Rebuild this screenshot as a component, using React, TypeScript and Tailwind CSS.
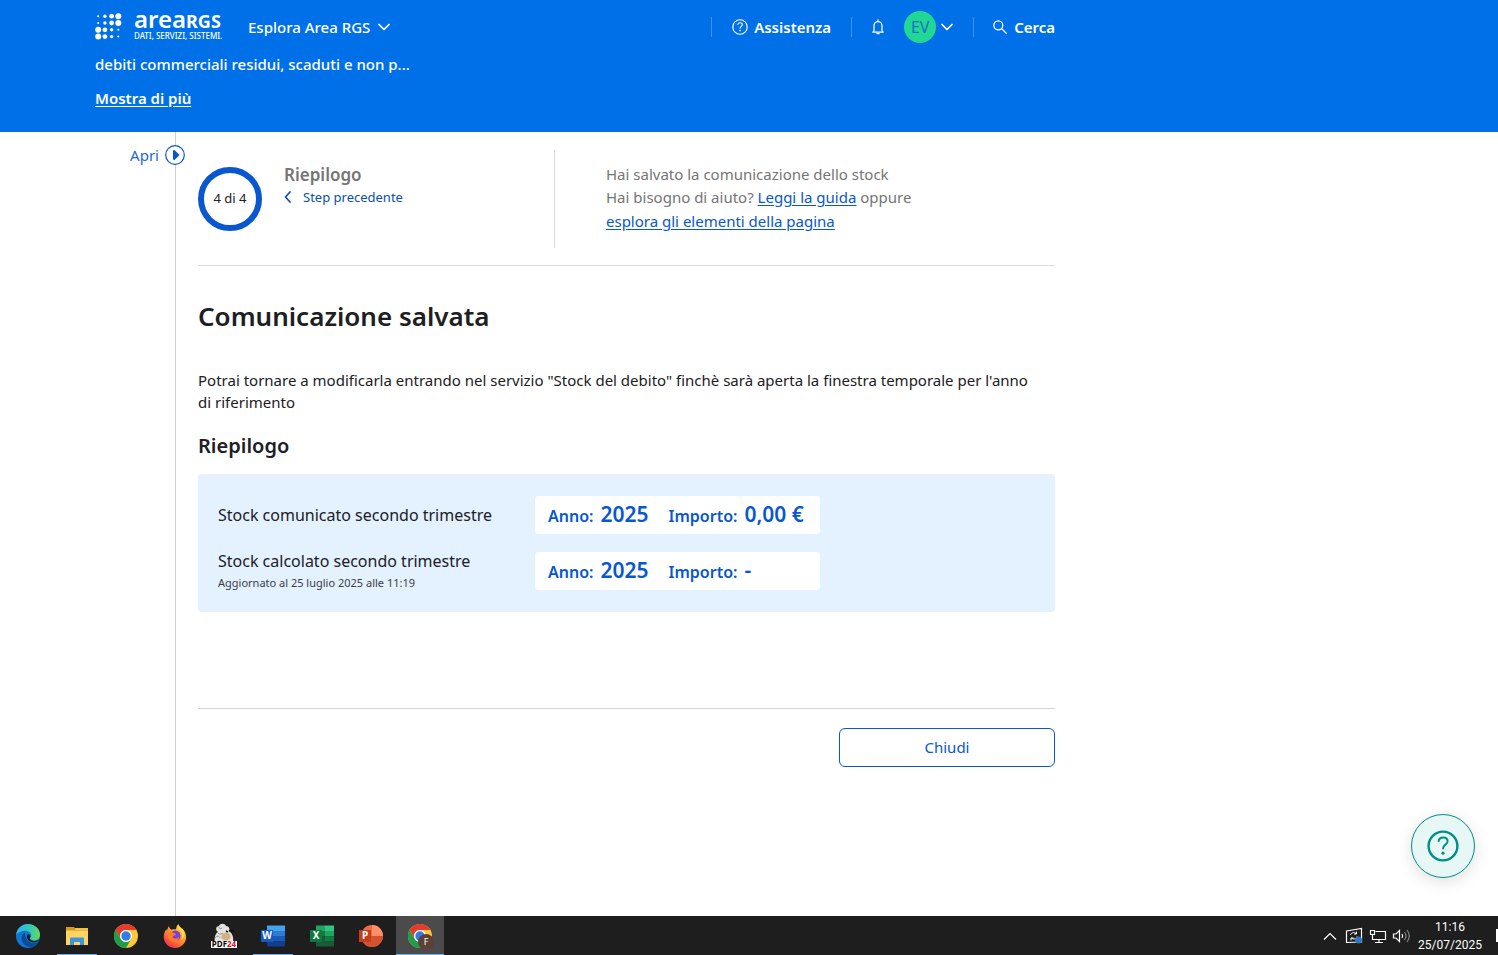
import type { ReactNode } from "react"

const DOTS = [
  [1, 1.7, 2.4, 3],
  [1, 1.7, 2.4, 3],
  [3, 2.4, 1.7, 1],
  [3, 2.4, 1.7, 1],
]

const STOCK_ROWS = [
  { label: "Stock comunicato secondo trimestre", note: null, year: "2025", amount: "0,00 €" },
  {
    label: "Stock calcolato secondo trimestre",
    note: "Aggiornato al 25 luglio 2025 alle 11:19",
    year: "2025",
    amount: "-",
  },
]

function ChevronDown() {
  return (
    <svg className="h-2 w-3" viewBox="0 0 12 8" fill="none" stroke="currentColor" strokeWidth={1.7} strokeLinecap="round" strokeLinejoin="round" aria-hidden>
      <path d="M1 1.500 6 6.500 11 1.500" />
    </svg>
  )
}

function HelpIcon({ className, ring, mark }: { className?: string; ring: number; mark: number }) {
  return (
    <svg className={className} viewBox="0 0 32 32" fill="none" stroke="currentColor" strokeLinecap="round" strokeLinejoin="round" aria-hidden>
      <circle cx="16" cy="16" r="14.4" strokeWidth={ring} />
      <path strokeWidth={mark} d="M11.6 11c.4-2.200 2.100-3.500 4.500-3.500 2.600 0 4.500 1.500 4.500 3.800 0 3.300-4.500 3.400-4.500 7.200" />
      <circle cx="16" cy="23.2" r="1.6" fill="currentColor" stroke="none" />
    </svg>
  )
}

function Logo() {
  return (
    <a href="#" className="flex w-[153px] shrink-0 items-center gap-3 pb-0.5 text-white">
      <svg className="h-[27px] w-[27px]" viewBox="0 0 27 27" fill="currentColor" aria-hidden>
        {DOTS.map((row, y) =>
          row.map((r, x) => <circle key={`${x}-${y}`} cx={3.2 + x * 6.7} cy={3.2 + y * 6.8} r={r} />)
        )}
      </svg>
      <span className="flex flex-col pb-1">
        <span className="flex items-baseline leading-5">
          <span className="text-2xl font-semibold leading-5">area</span>
          <span className="text-lg font-bold leading-5">RGS</span>
        </span>
        <span className="text-[8px] leading-[9px] whitespace-nowrap">DATI, SERVIZI, SISTEMI.</span>
      </span>
    </a>
  )
}

function Header() {
  return (
    <header className="h-[132px] bg-[#0070e9] text-[15px] font-medium leading-5 text-white">
      <div className="ml-[95px] mr-6 max-w-[960px]">
        <nav className="flex h-[54px] items-center">
          <Logo />
          <button type="button" className="flex items-center gap-2">
            Esplora Area RGS
            <ChevronDown />
          </button>
          <div className="ml-auto flex items-center font-semibold">
            <button type="button" className="flex items-center gap-[6px] border-l border-[#3d92f0] px-5">
              <HelpIcon className="h-4 w-4" ring={2.2} mark={2.2} />
              Assistenza
            </button>
            <button type="button" aria-label="Notifiche" className="flex h-5 items-center border-l border-[#3d92f0] px-[18px]">
              <svg className="h-4 w-4" viewBox="0 0 16 16" fill="none" stroke="currentColor" strokeWidth={1.2} strokeLinecap="round" strokeLinejoin="round" aria-hidden>
                <path d="M8 .8v1.400M4 11.800V6.600a4 4 0 0 1 8 0v5.200l1.200 1.400H2.800L4 11.800ZM6.800 14.600h2.400" />
              </svg>
            </button>
            <button type="button" aria-label="Profilo" className="flex items-center gap-[5px] pr-5">
              <span className="flex h-8 w-8 items-center justify-center rounded-full bg-[#20d894] text-base font-normal text-[#1f6fc9]">EV</span>
              <ChevronDown />
            </button>
            <button type="button" className="flex items-center gap-[6px] border-l border-[#3d92f0] pl-[18px]">
              <svg className="h-4 w-4" viewBox="0 0 16 16" fill="none" stroke="currentColor" strokeWidth={1.3} strokeLinecap="round" aria-hidden>
                <circle cx="6.3" cy="6.3" r="4.5" />
                <path d="m9.700 9.700 4.800 4.800" />
              </svg>
              Cerca
            </button>
          </div>
        </nav>
        <p>debiti commerciali residui, scaduti e non p...</p>
        <a href="#" className="mt-[14px] inline-block font-semibold underline underline-offset-2">
          Mostra di più
        </a>
      </div>
    </header>
  )
}

function StepBar() {
  return (
    <div className="flex h-[134px] items-start border-b border-[#dcdcdc] pt-[18px] text-[15px]">
      <div className="flex h-[98px] w-[357px] shrink-0 gap-[22px] border-r border-[#dcdcdc] pt-[17px]">
        <div className="flex h-16 w-16 items-center justify-center rounded-full border-[6px] border-[#0857ce] text-[13px] text-[#222]">
          4 di 4
        </div>
        <div>
          <p className="text-[17px] font-semibold leading-4 text-[#757575]">Riepilogo</p>
          <a href="#" className="mt-[6px] flex items-center gap-3 text-[13px] leading-4 text-[#0b4fb3]">
            <svg className="h-3 w-[7px]" viewBox="0 0 7 12" fill="none" stroke="currentColor" strokeWidth={1.7} strokeLinecap="round" strokeLinejoin="round" aria-hidden>
              <path d="M6 1 1.500 6 6 11" />
            </svg>
            Step precedente
          </a>
        </div>
      </div>
      <div className="pl-[51px] pt-[13px] text-[#757575]">
        <p className="leading-[22px]">Hai salvato la comunicazione dello stock</p>
        <p className="leading-6">
          Hai bisogno di aiuto?{" "}
          <a href="#" className="text-[#0857ce] underline underline-offset-2">Leggi la guida</a> oppure
          <br />
          <a href="#" className="text-[#0857ce] underline underline-offset-2">esplora gli elementi della pagina</a>
        </p>
      </div>
    </div>
  )
}

function Summary() {
  return (
    <dl className="mt-4 flex flex-col gap-[15px] rounded bg-[#e4f1ff] px-5 pb-[19px] pt-[22px]">
      {STOCK_ROWS.map((row) => (
        <div key={row.label} className="flex items-center">
          <dt className="w-[317px] shrink-0 text-base leading-6 text-[#1c2024]">
            {row.label}
            {row.note ? <span className="block text-[11px] leading-5 text-[#3a3f45]">{row.note}</span> : null}
          </dt>
          <dd className="flex h-[38px] w-[285px] items-center gap-5 rounded bg-white px-[13px] text-base font-semibold text-[#0857ce]">
            <span className="flex items-baseline gap-[7px]">
              Anno: <b className="text-[21px] font-semibold">{row.year}</b>
            </span>
            <span className="flex items-baseline gap-[7px]">
              Importo: <b className="text-[21px] font-semibold">{row.amount}</b>
            </span>
          </dd>
        </div>
      ))}
    </dl>
  )
}

function EdgeIcon() {
  return (
    <svg className="h-6 w-6" viewBox="0 0 24 24" aria-hidden>
      <defs>
        <linearGradient id="edgeTop" x1="0" y1="0.3" x2="1" y2="0.4">
          <stop offset="0" stopColor="#2fb3ee" />
          <stop offset="0.6" stopColor="#36c9b4" />
          <stop offset="1" stopColor="#67d958" />
        </linearGradient>
      </defs>
      <circle cx="12" cy="12" r="12" fill="#1277cf" />
      <path d="M.1 11C1 4 6 0 12 0c7 0 12 5.200 12 10.500 0 3.500-2.600 5.900-5.800 5.900-3 0-4.200-1.200-4.200-1.900 0-.8 1.200-1.200 1.200-3.200 0-2.700-2.800-4.600-6-4.600C5 6.700 1.600 8.500.1 11Z" fill="url(#edgeTop)" />
      <path d="M9.300 8.600c-3.600 1.200-5.200 6-2.300 10.300 2.300 3.300 6.400 4.400 9.600 4.100 2.600-.9 4.800-2.700 5.800-4.900-6.600 3.400-13.800-.6-13.100-9.500Z" fill="#0c4b9b" />
      <path d="M11.200 11.200c-1.200 3.800 2.400 7.400 7 7.200 1.800-.1 3.300-.6 4.500-1.500.5-.4.2-.9-.5-.7-1.200.5-2.400.7-3.800.7-3.900 0-5.200-2.300-4.400-3.400.6-.8.400-2-.4-2.700-.8-.7-2.100-.6-2.400.4Z" fill="#1e1e1e" />
    </svg>
  )
}

function FolderIcon() {
  return (
    <svg className="h-6 w-6" viewBox="0 0 24 24" aria-hidden>
      <path d="M1 3h8l1.500 2H23v4H1Z" fill="#d99a1c" />
      <path d="M10 4h13v2H10Z" fill="#f5c242" />
      <path d="M1 6.500h22V21H1Z" fill="#fdd364" />
      <path d="M5 21v-6.500a1 1 0 0 1 1-1h12a1 1 0 0 1 1 1V21h-4v-3H9v3Z" fill="#3e95d8" />
    </svg>
  )
}

function ChromeIcon({ badge }: { badge?: string }) {
  return (
    <span className="relative block">
      <svg className="h-6 w-6" viewBox="0 0 24 24" aria-hidden>
        <circle cx="12" cy="12" r="12" fill="#fcc934" />
        <path d="M1.600 6A12 12 0 0 1 22.400 6H12a6 6 0 0 0-5.200 9Z" fill="#e33b2e" />
        <path d="M1.600 6A12 12 0 0 0 12 24l5.200-9a6 6 0 0 1-10.400 0Z" fill="#1e9e4a" />
        <circle cx="12" cy="12" r="6" fill="#fff" />
        <circle cx="12" cy="12" r="4.700" fill="#2f7de9" />
      </svg>
      {badge ? (
        <span className="absolute -bottom-[2px] -right-[2px] flex h-4 w-4 items-center justify-center rounded-full bg-[#5d4037] text-[9px] text-white">
          {badge}
        </span>
      ) : null}
    </span>
  )
}

function FirefoxIcon() {
  return (
    <svg className="h-6 w-6" viewBox="0 0 24 24" aria-hidden>
      <defs>
        <linearGradient id="foxBody" x1="0.9" y1="0" x2="0.2" y2="1">
          <stop offset="0" stopColor="#ffe94a" />
          <stop offset="0.45" stopColor="#ff9a26" />
          <stop offset="1" stopColor="#f0264f" />
        </linearGradient>
      </defs>
      <path d="M15.300.3c.5 2.400 1.900 3.300 3 4.800l.5-.8c3 2.400 4.500 6.200 4.300 9.500C22.700 19.500 18 24 12 24S1 19.300.8 13.200C.700 9.700 1.700 7 3.400 4.900l.4 2C4.700 5.300 4.500 3.500 6 2.300c.2 1.900 1.300 2.700 2.800 3.500 1.400-.6 3.200-.6 4.200-.2.100-2 .8-4 2.300-5.300Z" fill="url(#foxBody)" />
      <circle cx="12.300" cy="11.800" r="5.300" fill="#7a3fe0" />
      <path d="M4.500 9.700c2-2 4.600-2 6.300-.6l2.200.9c-.4 1.600-2.700 1.700-3.400 2.500.2 2.600 4.300 2.600 6.400.4-.1 3.500-2.900 5.400-5.800 5-3.500-.5-5.700-3.800-5.700-8.200Z" fill="#ff7b2c" />
      <path d="M15.200.3c-.9 2.700.4 5 2.300 7 1.900 2.200 2.300 5.600.4 8.600 3-1.400 4.400-5.200 3.200-8.700-.9-2.700-4.500-3.700-5.900-6.900Z" fill="#ffdc3e" />
    </svg>
  )
}

function PdfIcon() {
  return (
    <span className="relative flex h-6 w-6 flex-col items-center justify-end">
      <svg className="absolute -top-px left-0 h-[21px] w-6" viewBox="0 0 24 21" aria-hidden>
        <path d="M3 20c-1-5 0-9 3-11C3 7 4 3 7 3c1-3 6-3 7 0 3 0 4 3 3 5 3 2 5 6 4 12Z" fill="#e3e3df" />
        <path d="M6 10c2 2 3 1 5 0M3 15c2-3 4-2 5 0M7 4c0 2 2 2 3 1" fill="none" stroke="#8b8b86" />
        <ellipse cx="14" cy="13.500" rx="4.700" ry="3.800" fill="#d1b184" />
        <path d="m14 8 2 1M17 8l5-.5" stroke="#111" strokeWidth={1.500} />
      </svg>
      <span className="relative flex h-[7px] items-center bg-white px-px text-[8px] font-bold leading-none text-black">
        PDF<span className="text-[#e3141b]">24</span>
      </span>
    </span>
  )
}

function OfficeIcon({ letter, tile, children }: { letter: string; tile: string; children: ReactNode }) {
  return (
    <span className="relative block">
      <svg className="h-6 w-6" viewBox="0 0 24 24" aria-hidden>
        {children}
      </svg>
      <span className={`absolute left-0 top-[6px] flex h-3 w-3 items-center justify-center text-[10px] font-bold text-white ${tile}`}>
        {letter}
      </span>
    </span>
  )
}

function TaskItem({ label, state, children }: { label: string; state?: "open" | "active"; children: ReactNode }) {
  return (
    <button
      type="button"
      aria-label={label}
      className={[
        "relative flex h-[39px] w-12 items-center justify-center",
        state === "active" ? "bg-[#4b4b4b]" : "",
      ].join(" ")}
    >
      {children}
      {state ? (
        <span
          className={[
            "absolute bottom-0 h-px bg-[#6cb3ee]",
            state === "active" ? "inset-x-0" : "inset-x-1",
          ].join(" ")}
        />
      ) : null}
    </button>
  )
}

function Taskbar() {
  return (
    <footer className="flex h-[39px] items-center justify-between bg-[#1e1e1e] text-white">
      <div className="flex gap-px pl-1">
        <TaskItem label="Edge"><EdgeIcon /></TaskItem>
        <TaskItem label="Esplora file" state="open"><FolderIcon /></TaskItem>
        <TaskItem label="Chrome"><ChromeIcon /></TaskItem>
        <TaskItem label="Firefox"><FirefoxIcon /></TaskItem>
        <TaskItem label="PDF24"><PdfIcon /></TaskItem>
        <TaskItem label="Word" state="open">
          <OfficeIcon letter="W" tile="bg-[#1a5abd]">
            <path d="M6 1.500h18V7H6Z" fill="#41a5ee" />
            <path d="M6 7h18v5H6Z" fill="#2b7cd3" />
            <path d="M6 12h18v5.500H6Z" fill="#185abd" />
            <path d="M6 17.500h18v5H6Z" fill="#103f91" />
          </OfficeIcon>
        </TaskItem>
        <TaskItem label="Excel">
          <OfficeIcon letter="X" tile="bg-[#10793f]">
            <path d="M6 1.500h9V7H6Z" fill="#21a366" />
            <path d="M15 1.500h9V7h-9Z" fill="#33c481" />
            <path d="M6 7h9v5.500H6Z" fill="#107c41" />
            <path d="M15 7h9v5.500h-9Z" fill="#21a366" />
            <path d="M6 12.500h9v10H6Z" fill="#185c37" />
            <path d="M15 12.500h9v5h-9Z" fill="#107c41" />
            <path d="M15 17.500h9v5h-9Z" fill="#185c37" />
          </OfficeIcon>
        </TaskItem>
        <TaskItem label="PowerPoint">
          <OfficeIcon letter="P" tile="bg-[#c43e1c]">
            <circle cx="13" cy="12" r="11" fill="#ed6c47" />
            <path d="M13 1a11 11 0 0 1 11 11H13Z" fill="#ff8f6b" />
            <path d="M2 12h22a11 11 0 0 1-22 0Z" fill="#d35230" />
          </OfficeIcon>
        </TaskItem>
        <TaskItem label="Chrome, profilo F" state="active"><ChromeIcon badge="F" /></TaskItem>
      </div>
      <div className="flex h-full items-center">
        <svg className="h-6 w-[92px]" viewBox="0 0 92 24" fill="none" stroke="currentColor" strokeWidth={1.2} aria-hidden>
          <path d="m2 15.500 6-6 6 6" />
          <path d="M24.500 7 39.500 4.500V18l-15 .5Z" />
          <path d="M28.500 11c.5-2.400 3.500-3.300 5.500-1.500M34.500 7.500v2.500H32M35 12.500c-.5 2.400-3.500 3.300-5.500 1.500M29 16.500V14h2.500" strokeWidth={1} />
          <circle cx="36.500" cy="16" r="3.500" fill="#2d78c6" stroke="none" />
          <path d="M53.500 7.500h10v8h-13v-5M57 15.500v3M53 18.500h8M48.500 6.500h4v4h-4ZM50.500 10.500V15" />
          <path d="M71.500 10h2.500l3.500-3.500v11L74 14h-2.500ZM80 10q1.500 2 0 4" />
          <path d="M82.500 8q3 4 0 8M85 6q4.500 6 0 12" stroke="#858585" />
        </svg>
        <time className="w-[72px] text-center font-['Roboto',sans-serif] text-xs leading-[18px]">
          11:16
          <br />
          25/07/2025
        </time>
        <span className="ml-[10px] h-[13px] w-[2px] bg-white" />
      </div>
    </footer>
  )
}

export default function App() {
  return (
    <div className="flex min-h-screen flex-col bg-white font-['Noto_Sans',sans-serif]">
      <Header />
      <main className="relative flex flex-1">
        <aside className="w-[176px] shrink-0 border-r border-[#d0d0d0] pt-[13px]">
          <button type="button" className="relative -right-[10px] ml-auto flex items-center gap-[6px] text-[15px] leading-5 text-[#2468ce]">
            Apri
            <svg className="h-5 w-5" viewBox="0 0 20 20" aria-hidden>
              <circle cx="10" cy="10" r="9.300" fill="#fff" stroke="#0857ce" strokeWidth={1.200} />
              <path d="M8 5.500 9.500 5l5 5-5 5-1.500-.5Z" fill="#0857ce" />
            </svg>
          </button>
        </aside>
        <section className="ml-[22px] mr-6 max-w-[857px] flex-1 text-[#1c2024]">
          <StepBar />
          <h1 className="mt-[34px] text-[26px] font-semibold leading-8">Comunicazione salvata</h1>
          <p className="mt-[37px] pr-4 text-[15px] leading-[22px]">
            Potrai tornare a modificarla entrando nel servizio "Stock del debito" finchè sarà aperta la finestra temporale per l'anno di riferimento
          </p>
          <h2 className="mt-[21px] text-xl font-semibold leading-6">Riepilogo</h2>
          <Summary />
          <div className="mt-24 flex justify-end border-t border-[#d0d0d0] pt-[19px]">
            <button type="button" className="h-[39px] w-[216px] rounded-md border border-[#0857ce] text-[15px] text-[#0857ce]">
              Chiudi
            </button>
          </div>
        </section>
        <button
          type="button"
          aria-label="Aiuto"
          className="absolute bottom-[38px] right-[23px] flex h-16 w-16 items-center justify-center rounded-full border border-[#008f83] bg-[#e6f7f6] text-[#008f83] shadow-[0_4px_16px_rgba(0,0,0,0.12)]"
        >
          <HelpIcon className="h-8 w-8" ring={2.400} mark={2} />
        </button>
      </main>
      <Taskbar />
    </div>
  )
}
